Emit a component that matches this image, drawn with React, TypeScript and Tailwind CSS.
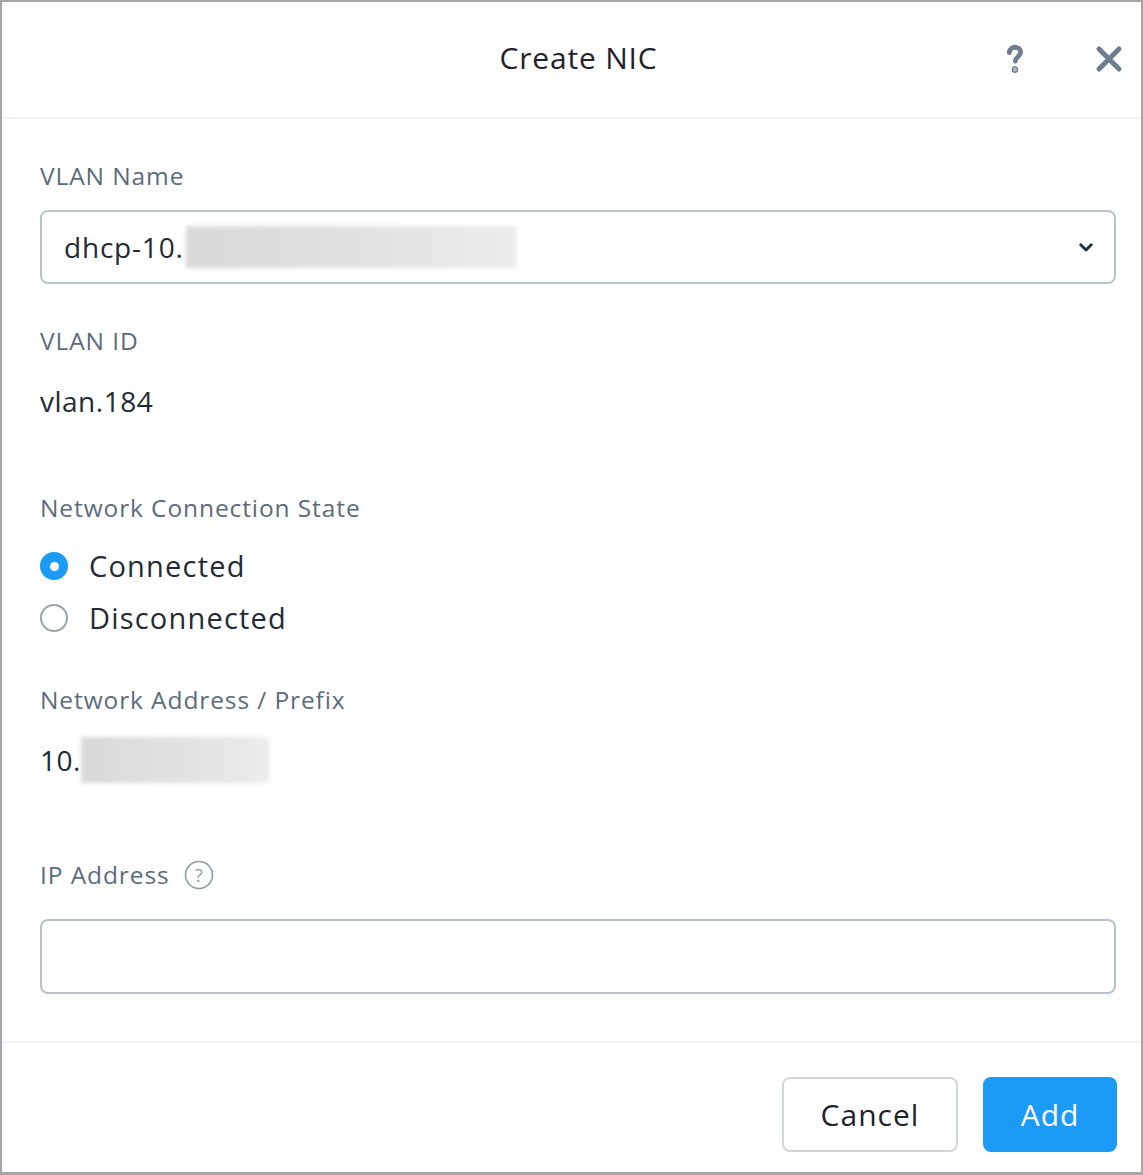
import { useState } from "react"

const font = { fontFamily: "'Open Sans', Lato, sans-serif" }

function Label({ children }: { children: React.ReactNode }) {
  return <div className="text-[24.5px] leading-[30px] tracking-[0.9px] text-[#5b6b7c]">{children}</div>
}

function Blur({ className }: { className: string }) {
  return <span className={"inline-block bg-gradient-to-r from-[#d9d9d9] via-[#e1e1e1] to-[#ececec] blur-[2px] " + className} />
}

function Radio({ checked, label, onClick }: { checked: boolean; label: string; onClick: () => void }) {
  return (
    <label className="flex cursor-pointer items-center gap-[21px]" onClick={onClick}>
      {checked ? (
        <span className="flex h-[28px] w-[28px] items-center justify-center rounded-full bg-[#1b9bf5]">
          <span className="h-[9px] w-[9px] rounded-full bg-white" />
        </span>
      ) : (
        <span className="h-[28px] w-[28px] rounded-full border-2 border-[#98a4b1] bg-white" />
      )}
      <span className="text-[29px] leading-[52px] tracking-[1.2px] text-[#232b35]">{label}</span>
    </label>
  )
}

export default function App() {
  const [state, setState] = useState("connected")
  const [ip, setIp] = useState("")

  return (
    <div className="h-[1175px] w-[1143px] bg-white" style={font}>
      <div className="flex h-full flex-col border-2 border-b-[3px] border-[#a6a6a6]">
        <div className="relative flex h-[117px] shrink-0 items-center justify-center border-b-2 border-[#eef1f5] pb-[4px] pl-[14px]">
          <h1 className="text-[30px] leading-[36px] tracking-[0.8px] text-[#1f242b]">Create NIC</h1>
          <button className="absolute left-[996px] top-[40px] text-[#6e7e90]">
            <svg width="34" height="34" viewBox="0 0 24 24" fill="none" stroke="currentColor" strokeWidth="3.4" strokeLinecap="round">
              <path d="M8 7.5c0-2.3 1.8-3.8 4-3.8s4 1.5 4 3.6c0 2.6-3.6 3.2-3.8 6.2" />
              <circle cx="12" cy="19.5" r="0.6" fill="currentColor" />
            </svg>
          </button>
          <button className="absolute left-[1092px] top-[42px] text-[#6e7e90]">
            <svg width="30" height="30" viewBox="0 0 24 24" fill="none" stroke="currentColor" strokeWidth="4" strokeLinecap="round">
              <path d="M4 4l16 16M20 4L4 20" />
            </svg>
          </button>
        </div>

        <div className="flex flex-1 flex-col pl-[38px] pr-[25px] pt-[42px]">
          <Label>VLAN Name</Label>
          <div className="mt-[19px] flex h-[74px] items-center rounded-[8px] border-2 border-[#b9c2cc] pl-[22px] pr-[19px]">
            <span className="text-[28px] tracking-[0.8px] text-[#222a34]">dhcp-10.</span>
            <Blur className="ml-[2px] h-[42px] w-[331px]" />
            <svg className="ml-auto text-[#2a3038]" width="18" height="18" viewBox="0 0 24 24" fill="none" stroke="currentColor" strokeWidth="4" strokeLinecap="round" strokeLinejoin="round">
              <path d="M5 9l7 7 7-7" />
            </svg>
          </div>

          <div className="mt-[42px]">
            <Label>VLAN ID</Label>
          </div>
          <div className="mt-[28px] text-[28px] leading-[34px] tracking-[0.5px] text-[#222a34]">vlan.184</div>

          <div className="mt-[75px]">
            <Label>Network Connection State</Label>
          </div>
          <div className="mt-[17px] flex flex-col">
            <Radio checked={state === "connected"} label="Connected" onClick={() => setState("connected")} />
            <Radio checked={state === "disconnected"} label="Disconnected" onClick={() => setState("disconnected")} />
          </div>

          <div className="mt-[41px]">
            <Label>Network Address / Prefix</Label>
          </div>
          <div className="mt-[22px] flex items-center">
            <span className="text-[28px] leading-[46px] tracking-[0.5px] text-[#222a34]">10.</span>
            <Blur className="h-[46px] w-[188px]" />
          </div>

          <div className="mt-[77px] flex items-center gap-[14px]">
            <Label>IP Address</Label>
            <svg width="30" height="30" viewBox="0 0 30 30" fill="none" className="text-[#8e99a6]">
              <circle cx="15" cy="15" r="13.5" stroke="currentColor" strokeWidth="1.6" />
              <text x="15" y="21.5" textAnchor="middle" fontSize="18" fill="currentColor" style={font}>?</text>
            </svg>
          </div>
          <input
            value={ip}
            onChange={e => setIp(e.target.value)}
            className="mt-[29px] h-[75px] w-full rounded-[8px] border-2 border-[#b9c2cc] px-[22px] text-[28px] text-[#222a34] outline-none"
          />
        </div>

        <div className="flex h-[131px] shrink-0 items-start justify-end gap-[25px] border-t-2 border-[#eef1f5] pr-[24px] pt-[34px]">
          <button className="h-[75px] w-[176px] rounded-[8px] border-2 border-[#d1d6dc] bg-white text-[30px] tracking-[1px] text-[#1f242b]">Cancel</button>
          <button className="h-[75px] w-[134px] rounded-[8px] bg-[#1b9bf5] text-[30px] tracking-[1px] text-white">Add</button>
        </div>
      </div>
    </div>
  )
}
